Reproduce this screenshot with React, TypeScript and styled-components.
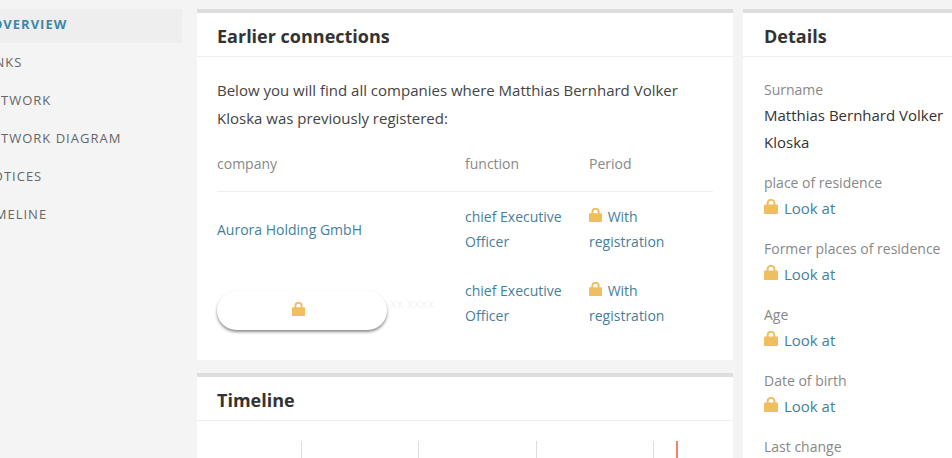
import React from "react";
import styled, { createGlobalStyle } from "styled-components";

const navItems = [
	{ label: "OVERVIEW", active: true },
	{ label: "LINKS" },
	{ label: "NETWORK" },
	{ label: "NETWORK DIAGRAM" },
	{ label: "NOTICES" },
	{ label: "TIMELINE" },
];

const positions = [
	{ company: "Aurora Holding GmbH", locked: false },
	{ company: "", locked: true },
];

const details = ["place of residence", "Former places of residence", "Age", "Date of birth"];

const ticks = [104, 221, 339, 456];

const Lock = ({ className }: { className?: string }) => (
	<svg className={className} viewBox="0 0 14 15" aria-hidden="true">
		<path d="M3.6 6.5V4.2a3.2 3.2 0 0 1 6.8 0v2.3" fill="none" stroke="currentColor" strokeWidth="2" />
		<rect x="0" y="5.5" width="14" height="9.5" rx="1" fill="currentColor" />
	</svg>
);

const App = () => {
	return (
		<>
			<GlobalStyle />
			<Page>
				<Sidebar>
					{navItems.map((item) => (
						<NavItem key={item.label} $active={item.active}>
							{item.label}
						</NavItem>
					))}
				</Sidebar>

				<MainColumn>
					<Card>
						<CardTitle>Earlier connections</CardTitle>
						<CardBody>
							<Intro>
								Below you will find all companies where Matthias Bernhard Volker Kloska was
								previously registered:
							</Intro>
							<TableHead>
								<span>company</span>
								<span>function</span>
								<span>Period</span>
							</TableHead>
							{positions.map((row, i) => (
								<TableRow key={i}>
									{row.locked ? (
										<LockedCell>
											<UnlockButton>
												<ButtonLock />
											</UnlockButton>
											<HiddenName>xx xxxx</HiddenName>
										</LockedCell>
									) : (
										<TextLink>{row.company}</TextLink>
									)}
									<TextLink>chief Executive Officer</TextLink>
									<TextLink>
										<InlineLock /> With registration
									</TextLink>
								</TableRow>
							))}
						</CardBody>
					</Card>

					<Card>
						<CardTitle>Timeline</CardTitle>
						<Chart>
							{ticks.map((x) => (
								<Tick key={x} style={{ left: x }} />
							))}
							<Marker />
						</Chart>
					</Card>
				</MainColumn>

				<DetailsColumn>
					<Card>
						<CardTitle $inset={21}>Details</CardTitle>
						<DetailsBody>
							<DetailGroup>
								<DetailLabel>Surname</DetailLabel>
								<DetailValue>Matthias Bernhard Volker Kloska</DetailValue>
							</DetailGroup>
							{details.map((label) => (
								<DetailGroup key={label}>
									<DetailLabel>{label}</DetailLabel>
									<DetailLink>
										<InlineLock $size={14} /> Look at
									</DetailLink>
								</DetailGroup>
							))}
							<DetailGroup>
								<DetailLabel>Last change</DetailLabel>
							</DetailGroup>
						</DetailsBody>
					</Card>
				</DetailsColumn>
			</Page>
		</>
	);
};

export default App;

const GlobalStyle = createGlobalStyle`
	html, body {
		margin: 0;
		padding: 0;
		background: #f4f4f4;
	}

	body {
		font-family: "Open Sans", "Noto Sans", sans-serif;
		font-size: 14px;
		color: #333;
	}
`;

const Page = styled.div`
	display: flex;
	align-items: flex-start;
	width: 952px;
	height: 458px;
	overflow: hidden;
`;

const Sidebar = styled.nav`
	flex: none;
	display: flex;
	flex-direction: column;
	width: 202px;
	margin: 9px 15px 0 -20px;
`;

const NavItem = styled.div<{ $active?: boolean }>`
	height: ${({ $active }) => ($active ? "34px" : "38px")};
	line-height: ${({ $active }) => ($active ? "31px" : "38px")};
	padding-left: ${({ $active }) => ($active ? "12px" : "2px")};
	font-size: 13px;
	letter-spacing: 1px;
	white-space: nowrap;
	font-weight: ${({ $active }) => ($active ? 700 : 400)};
	color: ${({ $active }) => ($active ? "#3f87a6" : "#666")};
	background: ${({ $active }) => ($active ? "#eeeeee" : "transparent")};
`;

const MainColumn = styled.div`
	flex: none;
	display: flex;
	flex-direction: column;
	gap: 13px;
	width: 536px;
	margin-top: 9px;
`;

const DetailsColumn = styled.div`
	flex: none;
	width: 260px;
	margin: 9px 0 0 10px;
`;

const Card = styled.section`
	background: #fff;
	border-top: 4px solid #dddddd;
`;

const CardTitle = styled.h2<{ $inset?: number }>`
	margin: 0;
	height: 43px;
	line-height: 47px;
	padding: 0 ${({ $inset }) => $inset ?? 20}px;
	font-size: 18px;
	font-weight: 700;
	color: #333;
	border-bottom: 1px solid #eeeeee;
`;

const CardBody = styled.div`
	padding: 19px 20px 20px;
`;

const Intro = styled.p`
	margin: 0;
	font-size: 15px;
	line-height: 28px;
	color: #444;
`;

const TableHead = styled.div`
	display: grid;
	grid-template-columns: 248px 124px 1fr;
	height: 60px;
	line-height: 64px;
	box-sizing: border-box;
	border-bottom: 1px solid #eeeeee;
	color: #888;
	font-size: 14px;
`;

const TableRow = styled.div`
	display: grid;
	grid-template-columns: 248px 124px 96px;
	align-items: center;
	height: 74px;
`;

const LockedCell = styled.div`
	display: flex;
	align-items: center;
	gap: 3px;
	margin-top: 15px;
`;

const TextLink = styled.div`
	font-size: 14px;
	line-height: 25px;
	color: #457f9b;
`;

const DetailLink = styled(TextLink)`
	font-size: 15px;
	line-height: 27px;
	margin-bottom: -2px;
`;

const UnlockButton = styled.div`
	display: flex;
	align-items: center;
	justify-content: center;
	flex: none;
	box-sizing: border-box;
	width: 170px;
	height: 39px;
	padding: 0 7px 4px 0;
	border-radius: 20px;
	background: #fff;
	box-shadow: 0 2px 3px rgba(0, 0, 0, 0.45);
`;

const HiddenName = styled.span`
	color: #f3f3f3;
	font-size: 13px;
	white-space: nowrap;
	filter: blur(0.5px);
	margin-top: -16px;
`;

const InlineLock = styled(Lock)<{ $size?: number }>`
	display: inline-block;
	width: ${({ $size }) => $size ?? 13}px;
	height: ${({ $size }) => ($size ?? 13) + 1}px;
	margin-right: 2px;
	color: #f0bd5f;
`;

const ButtonLock = styled(Lock)`
	width: 13px;
	height: 14px;
	color: #f0bd5f;
`;

const Chart = styled.div`
	position: relative;
	height: 60px;
`;

const Tick = styled.div`
	position: absolute;
	top: 20px;
	bottom: 0;
	width: 1px;
	background: #dddddd;
`;

const Marker = styled.div`
	position: absolute;
	top: 20px;
	bottom: 0;
	left: 479px;
	width: 2px;
	background: #f77f6e;
`;

const DetailsBody = styled.div`
	display: flex;
	flex-direction: column;
	gap: 16px;
	padding: 20px 21px 0;
	width: 190px;
`;

const DetailGroup = styled.div`
	display: flex;
	flex-direction: column;
`;

const DetailLabel = styled.div`
	font-size: 14px;
	line-height: 25px;
	color: #888;
`;

const DetailValue = styled.div`
	font-size: 15px;
	line-height: 27px;
	margin-bottom: -2px;
	color: #333;
`;
